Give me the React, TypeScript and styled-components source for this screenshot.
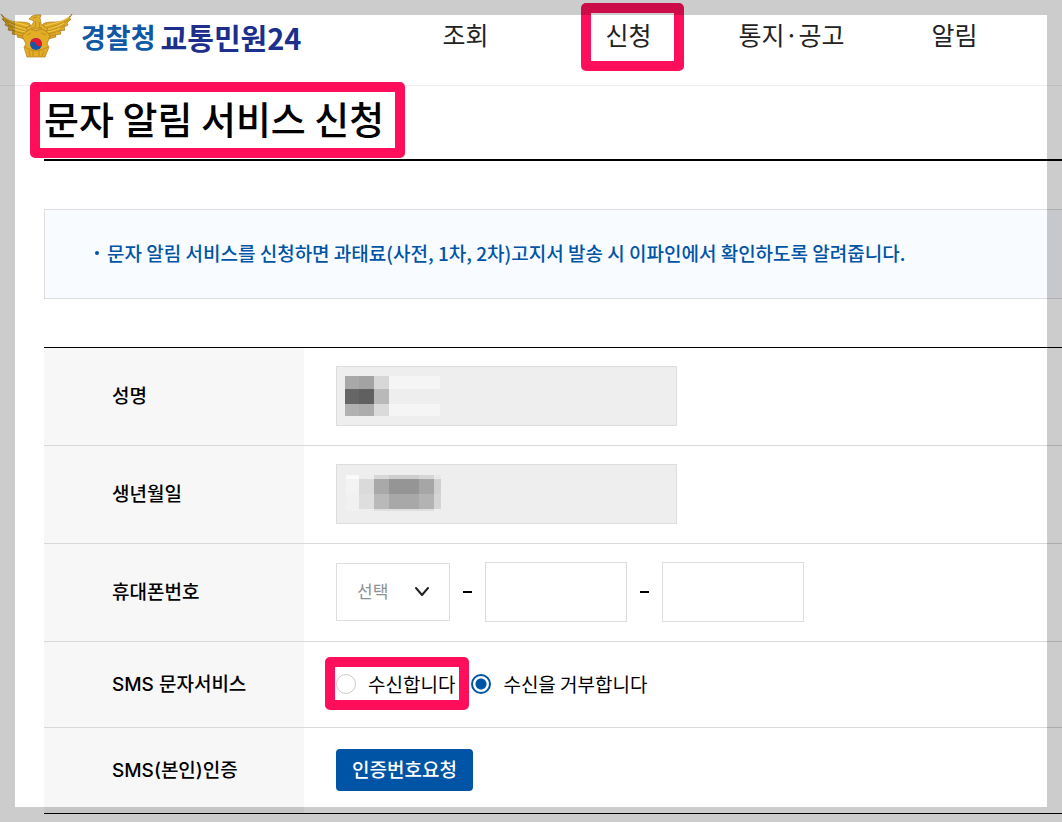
import React, { useState } from "react";
import styled, { createGlobalStyle, css } from "styled-components";

const GlobalStyle = createGlobalStyle`
  *, *::before, *::after { box-sizing: border-box; }
  html, body, #root { min-height: 100vh; }
  body {
    margin: 0;
    background: #fff;
    color: #000;
    font-family: "Noto Sans CJK KR", sans-serif;
    font-size: 19px;
    font-weight: 500;
    line-height: 28px;
  }
  input, select, button { font: inherit; color: inherit; }
`;

const Page = styled.div`
  position: relative;
  min-height: 100vh;
  overflow: hidden;
`;

const PageFrame = styled.div`
  position: absolute;
  inset: 0;
  z-index: 5;
  border: 15px solid rgba(0, 0, 0, 0.2);
  pointer-events: none;
`;

const Header = styled.header`
  display: flex;
  align-items: flex-start;
  height: 86px;
  padding-right: 26px;
  border-bottom: 1px solid #efefef;
`;

const Logo = styled.a`
  display: flex;
  flex: 0 0 384px;
  gap: 8px;
  padding-top: 13px;
  color: #1c2f8d;
  text-decoration: none;
`;

const Emblem = styled.svg`
  width: 73px;
  height: 46px;
`;

const LogoText = styled.span`
  display: flex;
  gap: 5px;
  font-size: 29px;
  font-weight: 700;
  line-height: 48px;
  white-space: nowrap;
`;

const LogoAgency = styled.span`
  color: #0f58a5;
  font-size: 27px;
`;

const Nav = styled.nav`
  display: grid;
  flex: 1;
  grid-template-columns: repeat(4, 1fr);
  justify-items: center;
  padding-top: 16px;
`;

const NavLink = styled.a`
  position: relative;
  color: #222;
  font-size: 25px;
  font-weight: 400;
  line-height: 36px;
  text-decoration: none;
  white-space: nowrap;
`;

const Highlight = styled.span<{ $inset: string }>`
  position: absolute;
  z-index: 1;
  inset: ${({ $inset }) => $inset};
  border: 10px solid #ff0f5b;
  border-radius: 5px;
  pointer-events: none;
`;

const Main = styled.main`
  padding: 0 0 8px 44px;
`;

const TitleBar = styled.div`
  padding: 4px 0 13px;
  border-bottom: 2px solid #000;
`;

const Title = styled.h1`
  position: relative;
  width: fit-content;
  margin: 0;
  font-size: 38px;
  font-weight: 500;
  line-height: 56px;
`;

const Notice = styled.ul`
  margin: 48px 0;
  padding: 29px 48px 31px;
  border: 1px solid #ddd;
  border-right: 0;
  background: #f8fbff;
  color: #0054a6;
  list-style: none;
`;

const NoticeItem = styled.li`
  display: flex;
  align-items: center;
  gap: 8px;
  &::before {
    content: "";
    flex: none;
    width: 4px;
    height: 4px;
    margin-left: 2px;
    border-radius: 50%;
    background: currentColor;
  }
`;

const FormTable = styled.table`
  width: 100%;
  border-top: 1px solid #000;
  border-bottom: 1px solid #000;
  border-spacing: 0;
`;

const Row = styled.tr`
  &:not(:last-child) > * { border-bottom: 1px solid #d9d9d9; }
  &:last-child > td { height: 85px; }
`;

const RowHead = styled.th<{ $latin?: boolean }>`
  width: 260px;
  padding: 0 0 3px 68px;
  background: #f7f7f7;
  font-weight: 500;
  text-align: left;
  ${({ $latin }) => $latin && css`
    padding-bottom: 0;
    font-family: Inter, "Noto Sans CJK KR", sans-serif;
  `}
`;

const Cell = styled.td<{ $compact?: boolean }>`
  height: ${({ $compact }) => ($compact ? 86 : 98)}px;
  padding: 0 0 2px 32px;
`;

const MaskedField = styled.div`
  position: relative;
  width: 341px;
`;

const TextInput = styled.input<{ $width: string }>`
  display: block;
  width: ${({ $width }) => $width};
  height: 60px;
  padding: 0 16px;
  border: 1px solid #ddd;
  border-radius: 0;
  background: #fff;
  outline: 0;
  &:disabled { background: #eee; }
`;

const Mosaic = styled.svg`
  position: absolute;
  top: 10px;
  left: 9px;
  width: 96px;
  height: 40px;
`;

const PhoneGroup = styled.div`
  display: flex;
  align-items: center;
`;

const Dash = styled.span`
  display: flex;
  justify-content: center;
  width: 35px;
  &::before {
    content: "";
    width: 9px;
    height: 2px;
    background: #000;
  }
`;

const SelectBox = styled.div`
  position: relative;
  width: 114px;
`;

const Select = styled.select`
  display: block;
  width: 100%;
  height: 58px;
  padding: 0 20px 2px;
  border: 1px solid #ddd;
  border-radius: 0;
  appearance: none;
  background: #fff;
  color: #8e9197;
  font-size: 17px;
  font-weight: 400;
`;

const Chevron = styled.svg`
  position: absolute;
  top: 23px;
  right: 20px;
  width: 16px;
  height: 12px;
  pointer-events: none;
`;

const RadioGroup = styled.div`
  display: flex;
  align-items: center;
  gap: 16px;
`;

const RadioLabel = styled.label`
  position: relative;
  display: flex;
  align-items: center;
  gap: 12px;
  font-weight: 400;
`;

const Radio = styled.input`
  appearance: none;
  width: 20px;
  height: 20px;
  margin: 0;
  border: 1px solid #ccc;
  border-radius: 50%;
  background: #fff;
  &:checked {
    border: 2px solid #0054a6;
    background: radial-gradient(circle, #0054a6 5px, #fff 6px);
  }
`;

const RequestButton = styled.button`
  display: block;
  height: 42px;
  padding: 0 16px 2px;
  border: 0;
  border-radius: 4px;
  background: #0054a6;
  color: #fff;
`;

const nameMosaic = [
  [0, 0, 14, 13, "#a8a8a8"], [14, 0, 15, 13, "#a3a3a3"], [29, 0, 15, 13, "#d7d7d7"], [44, 0, 51, 13, "#f5f5f5"],
  [0, 13, 14, 15, "#666"], [14, 13, 15, 15, "#606060"], [29, 13, 15, 15, "#b9b9b9"],
  [0, 28, 14, 12, "#b1b1b1"], [14, 28, 15, 12, "#acacac"], [29, 28, 15, 12, "#dadada"], [44, 28, 51, 12, "#f5f5f5"],
] as const;

const birthMosaic = [
  [1, 1, 13, 4, "#fafafa"], [14, 1, 15, 4, "#ededed"], [29, 1, 15, 4, "#d8d8d8"], [44, 1, 30, 4, "#cecece"], [74, 1, 15, 4, "#d6d6d6"], [89, 1, 7, 4, "#e8e8e8"],
  [1, 5, 13, 15, "#f3f3f3"], [14, 5, 15, 15, "#dadada"], [29, 5, 15, 15, "#a9a9a9"], [44, 5, 30, 15, "#959595"], [74, 5, 15, 15, "#a6a6a6"], [89, 5, 7, 15, "#d0d0d0"],
  [1, 20, 13, 15, "#f1f1f1"], [14, 20, 15, 15, "#dedede"], [29, 20, 15, 15, "#b9b9b9"], [44, 20, 30, 15, "#a8a8a8"], [74, 20, 15, 15, "#b3b3b3"], [89, 20, 7, 15, "#d5d5d5"],
  [1, 35, 13, 2, "#f1f1f1"], [29, 35, 60, 2, "#dfdfdf"],
] as const;

type Tile = readonly [number, number, number, number, string];

function MosaicTiles({ tiles }: { tiles: readonly Tile[] }) {
  return (
    <Mosaic viewBox="0 0 96 40" shapeRendering="crispEdges" aria-hidden="true">
      {tiles.map(([x, y, w, h, fill]) => (
        <rect key={`${x}-${y}`} x={x} y={y} width={w} height={h} fill={fill} />
      ))}
    </Mosaic>
  );
}

function PoliceEmblem() {
  const wing = (
    <>
      <path d="M1 1C5 6 11 9 18 9C23 9 27 9 30 11L32 24L25 26L17 24L18 22L12 21L13 18L8 17L9 14L5 12L6 10L2 6L4 6Z" fill="#deaa24" stroke="#a8791f" strokeWidth="0.7" />
      <path d="M5 7C12 12 20 13 28 16M8 12C15 16 22 17 28 19M12 17C18 20 24 20 29 22M17 22L29 24" fill="none" stroke="#b5831c" strokeWidth="0.8" />
      <path d="M4 4C12 10 20 10 28 13M9 10C16 14 22 15 28 17M13 15C18 18 24 18 28 20" fill="none" stroke="#f2cd4e" strokeWidth="1" />
    </>
  );
  return (
    <Emblem viewBox="0 0 73 46" aria-hidden="true">
      {wing}
      <g transform="translate(73 0) scale(-1 1)">{wing}</g>
      <path d="M29 6L32 3L36 2L41 2L40 5L41 11L48 16L44 20L29 20L26 15L32 12L34 8Z" fill="#e3b02c" stroke="#a8791f" strokeWidth="0.7" />
      <path d="M33 5L37 4M36 8L35 14M39 9L40 15M31 15L42 15" stroke="#b5831c" strokeWidth="0.8" fill="none" />
      <path d="M27 18L31 16L36 18L41 16L46 18L50 23L47 31L49 34L45 44L27 44L24 34L26 31L22 23Z" fill="#e3ae25" stroke="#a8791f" strokeWidth="0.7" />
      <path d="M25 34L30 37L36 38L42 37L48 34M29 38L30 43M33 38V43M39 38V43M44 38L42 43M27 22L31 20M41 20L46 22" stroke="#b5831c" strokeWidth="0.8" fill="none" />
      <circle cx="36" cy="31" r="6" fill="#1756a8" />
      <path d="M30 31A6 6 0 0 1 42 31C41 34 37 34 36 31C35 28 31 28 30 31Z" fill="#e21b32" />
    </Emblem>
  );
}

export default function App() {
  const [receive, setReceive] = useState("no");
  return (
    <Page>
      <GlobalStyle />
      <Header>
        <Logo href="#">
          <PoliceEmblem />
          <LogoText>
            <LogoAgency>경찰청</LogoAgency>
            <span>교통민원24</span>
          </LogoText>
        </Logo>
        <Nav>
          <NavLink href="#">조회</NavLink>
          <NavLink href="#">
            신청
            <Highlight $inset="-13px -32px -19px -24px" />
          </NavLink>
          <NavLink href="#">통지·공고</NavLink>
          <NavLink href="#">알림</NavLink>
        </Nav>
      </Header>
      <Main>
        <TitleBar>
          <Title>
            문자 알림 서비스 신청
            <Highlight $inset="-8px -21px -12px -14px" />
          </Title>
        </TitleBar>
        <Notice>
          <NoticeItem>
            문자 알림 서비스를 신청하면 과태료(사전, 1차, 2차)고지서 발송 시 이파인에서 확인하도록 알려줍니다.
          </NoticeItem>
        </Notice>
        <FormTable>
          <tbody>
            <Row>
              <RowHead scope="row"><label htmlFor="name">성명</label></RowHead>
              <Cell>
                <MaskedField>
                  <TextInput id="name" $width="100%" disabled />
                  <MosaicTiles tiles={nameMosaic} />
                </MaskedField>
              </Cell>
            </Row>
            <Row>
              <RowHead scope="row"><label htmlFor="birth">생년월일</label></RowHead>
              <Cell>
                <MaskedField>
                  <TextInput id="birth" $width="100%" disabled />
                  <MosaicTiles tiles={birthMosaic} />
                </MaskedField>
              </Cell>
            </Row>
            <Row>
              <RowHead scope="row"><label id="phone-label" htmlFor="phone">휴대폰번호</label></RowHead>
              <Cell>
                <PhoneGroup>
                  <SelectBox>
                    <Select id="phone"><option>선택</option></Select>
                    <Chevron viewBox="0 0 16 12" aria-hidden="true">
                      <path d="M2 2L8 9L14 2" fill="none" stroke="#222" strokeWidth="2" strokeLinecap="round" strokeLinejoin="round" />
                    </Chevron>
                  </SelectBox>
                  <Dash />
                  <TextInput $width="142px" aria-labelledby="phone-label" />
                  <Dash />
                  <TextInput $width="142px" aria-labelledby="phone-label" />
                </PhoneGroup>
              </Cell>
            </Row>
            <Row>
              <RowHead scope="row" $latin>SMS 문자서비스</RowHead>
              <Cell $compact>
                <RadioGroup>
                  <RadioLabel>
                    <Radio type="radio" name="sms" checked={receive === "yes"} onChange={() => setReceive("yes")} />
                    수신합니다
                    <Highlight $inset="-13px -14px -12px -11px" />
                  </RadioLabel>
                  <RadioLabel>
                    <Radio type="radio" name="sms" checked={receive === "no"} onChange={() => setReceive("no")} />
                    수신을 거부합니다
                  </RadioLabel>
                </RadioGroup>
              </Cell>
            </Row>
            <Row>
              <RowHead scope="row" $latin>SMS(본인)인증</RowHead>
              <Cell $compact>
                <RequestButton type="button">인증번호요청</RequestButton>
              </Cell>
            </Row>
          </tbody>
        </FormTable>
      </Main>
      <PageFrame />
    </Page>
  );
}
